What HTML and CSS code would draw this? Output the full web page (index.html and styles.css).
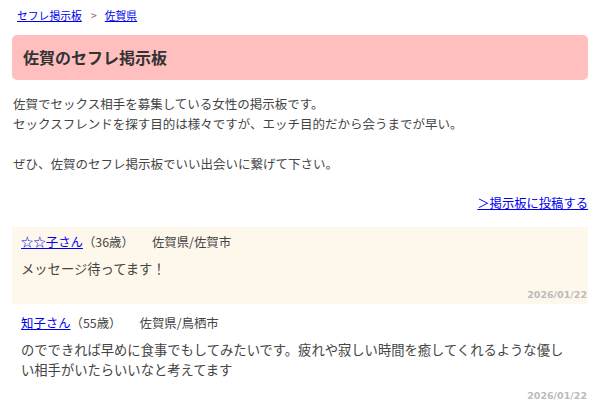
FILE: index.html
```html
<!DOCTYPE html>
<html lang="ja">
<head>
<meta charset="utf-8">
<title>佐賀のセフレ掲示板</title>
<link rel="stylesheet" href="styles.css">
</head>
<body>
<div class="page">
  <nav class="crumbs">
    <a href="#">セフレ掲示板</a><span class="sep">&gt;</span><a href="#">佐賀県</a>
  </nav>
  <h1 class="title">佐賀のセフレ掲示板</h1>
  <div class="intro">
    <p>佐賀でセックス相手を募集している女性の掲示板です。<br>セックスフレンドを探す目的は様々ですが、エッチ目的だから会うまでが早い。</p>
    <p>ぜひ、佐賀のセフレ掲示板でいい出会いに繋げて下さい。</p>
  </div>
  <div class="post-link"><a href="#">＞掲示板に投稿する</a></div>
  <div class="posts">
    <div class="post odd">
      <div class="meta"><a href="#">☆☆子さん</a><span class="age">（36歳）</span><span class="area">佐賀県/佐賀市</span></div>
      <div class="msg">メッセージ待ってます！</div>
      <div class="date">2026/01/22</div>
    </div>
    <div class="post">
      <div class="meta"><a href="#">知子さん</a><span class="age">（55歳）</span><span class="area">佐賀県/鳥栖市</span></div>
      <div class="msg">のでできれば早めに食事でもしてみたいです。疲れや寂しい時間を癒してくれるような優し<br>い相手がいたらいいなと考えてます</div>
      <div class="date">2026/01/22</div>
    </div>
  </div>
</div>
</body>
</html>
```
FILE: styles.css
```css
html, body { margin: 0; padding: 0; background: #fff; }
body {
  font-family: "Noto Sans CJK JP", "Noto Sans", sans-serif;
  font-size: 12.5px;
  color: #444;
}
a { color: #0000ee; }
.page { padding: 5px 12px 0 12px; }
.crumbs {
  line-height: 20px;
  font-size: 10.8px;
  padding-left: 5px;
  margin-bottom: 10px;
  display: flex;
  align-items: center;
}
.crumbs .sep { color: #666; margin: 0 8px 0 9px; }
.title {
  margin: 0;
  background: #ffbfbf;
  border-radius: 5px;
  height: 45px;
  line-height: 45px;
  padding: 0 11px;
  font-size: 16px;
  font-weight: bold;
  color: #333;
}
.intro { margin-top: 14px; line-height: 20px; font-size: 12.5px; }
.intro p { margin: 0 0 20px 1px; }
.intro p:last-child { margin-bottom: 0; }
.post-link { margin-top: 19px; line-height: 20px; text-align: right; font-size: 12.3px; }
.posts { margin-top: 14px; display: flex; flex-direction: column; gap: 4px; }
.post { padding: 5px 8px 2px 9px; }
.post.odd { background: #fef8ec; }
.meta { line-height: 20px; display: flex; font-size: 12.4px; }
.meta .area { margin-left: 18px; }
.msg { margin-top: 7px; line-height: 20px; font-size: 13.3px; }
.date {
  margin-top: 9px;
  text-align: right;
  font-family: "DejaVu Sans", sans-serif;
  font-weight: bold;
  font-size: 9.5px;
  line-height: 14px;
  color: #bbb;
  margin-right: -7px;
}
```
